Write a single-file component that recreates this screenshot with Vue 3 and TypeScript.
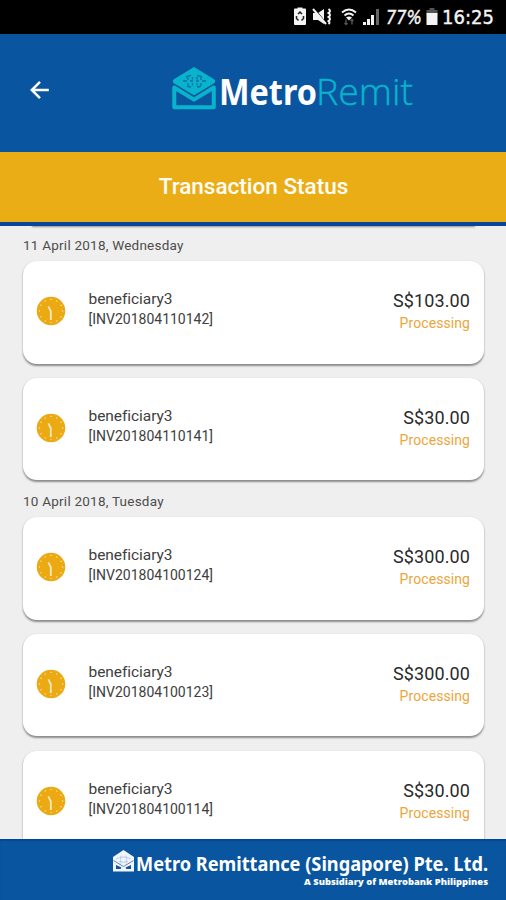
<script setup lang="ts">
interface Transaction {
  name: string
  invoice: string
  amount: string
  status: string
}

interface DayGroup {
  date: string
  items: Transaction[]
}

const entry = (invoice: string, amount: string): Transaction => ({
  name: 'beneficiary3',
  invoice: `[${invoice}]`,
  amount,
  status: 'Processing',
})

const groups: DayGroup[] = [
  {
    date: '11 April 2018, Wednesday',
    items: [entry('INV201804110142', 'S$103.00'), entry('INV201804110141', 'S$30.00')],
  },
  {
    date: '10 April 2018, Tuesday',
    items: [
      entry('INV201804100124', 'S$300.00'),
      entry('INV201804100123', 'S$300.00'),
      entry('INV201804100114', 'S$30.00'),
    ],
  },
]

const ticks = Array.from({ length: 12 }, (_, i) => {
  const a = (i * Math.PI) / 6
  return { x: 15 + 11.6 * Math.sin(a), y: 15 - 11.6 * Math.cos(a) }
})
</script>

<template>
  <div class="screen">
    <div class="status-bar">
      <svg class="status-art" viewBox="0 0 216 34" width="216" height="34">
        <g fill="#f4f4f4">
          <path d="M6 8.500h1.500v-1h5v1H15q1 0 1 1V24q0 1-1 1H5q-1 0-1-1V9.500q0-1 1-1z" />
          <path d="m8 14 2-2 2 2M13.500 16v2.500l-2 2M8.500 20.500l-2-2V16" fill="none" stroke="#222" stroke-width="1.500" />
          <path d="M23 13h5l6-4v15l-6-4h-5z" />
          <path d="M38.500 9q3 2 0 4 3 2 0 4 3 2 0 4 2 1.500 0 3" fill="none" stroke="#f4f4f4" stroke-width="2" />
          <path d="m25 9 12 15" stroke="#000" stroke-width="1" />
          <path d="m23 9 13 15" stroke="#f4f4f4" stroke-width="2" />
          <path d="M52 12.500q7-6 14 0M54.500 15.500q4.500-4 9 0" fill="none" stroke="#f4f4f4" stroke-width="2" />
          <path d="M56 17.500q3-2 6 0l-3 3z" />
          <path d="M56 19.500v5m-1.500-1.500 1.500 1.500 1.500-1.500M62 24.500v-5m-1.500 1.500 1.500-1.500 1.500 1.500" fill="none" stroke="#555" stroke-width="1.400" />
          <path d="M73 22h3v3h-3zM77 19h3v6h-3zM81 15h3v10h-3z" />
          <path d="M86 9h3v16h-3z" fill="#666" />
          <text class="status-text" x="96" y="24" textLength="36" lengthAdjust="spacingAndGlyphs" font-style="italic">77%</text>
          <path d="M139.500 8h5V10.500h-5zM136.500 10h11v4h-11z" fill="#555" />
          <path d="M136.500 13h11v12h-11z" />
          <text class="status-text" x="152" y="24" textLength="52" lengthAdjust="spacingAndGlyphs">16:25</text>
        </g>
      </svg>
    </div>

    <header class="app-bar">
      <svg class="back" viewBox="0 0 20 20" width="20" height="20">
        <path d="M18.800 10H2M10 1.800 1.800 10l8.200 8.200" fill="none" stroke="#fff" stroke-width="2.500" />
      </svg>
      <svg class="brand" viewBox="0 0 244 60" width="244" height="60">
        <path d="M23 1.500 43.500 14V16.500L23 28.800 2.500 16.500V14z" fill="#08b4cb" stroke="#08b4cb" stroke-linejoin="round" />
        <g fill="none" stroke="#0b6dac" stroke-width="1.400">
          <path d="M15 11q3-1.500 5-1.500M26 9.500q2 0 5 1.500M12 15h4M19 15h3M25 15h3M31 15h4M16 20q2 1 4 1M26 21q2 0 4-1" />
          <path d="M17 11.500v2.500M17 17v2.500M30 11.500v2.500M30 17v2.500M21.500 11v2.500M21.500 17v2.500M26 11v2.500M26 17v2.500" />
        </g>
        <path d="M3.300 21.500V41.200h39.500V21.500L23 33.600z" fill="none" stroke="#08b4cb" stroke-width="4" stroke-linejoin="round" />
        <text class="brand-bold" x="48" y="38.500" textLength="98" lengthAdjust="spacingAndGlyphs">Metro</text>
        <text class="brand-light" x="145" y="38.500" textLength="97" lengthAdjust="spacingAndGlyphs">Remit</text>
      </svg>
    </header>

    <h1 class="title"><span>Transaction Status</span></h1>

    <main class="list">
      <div class="passed-card"></div>
      <section v-for="group in groups" :key="group.date">
        <h2 class="date">{{ group.date }}</h2>
        <article v-for="item in group.items" :key="item.invoice" class="card">
          <svg class="clock" viewBox="0 0 30 30" width="30" height="30">
            <circle cx="15" cy="15" r="14.300" fill="#ebaa14" />
            <circle v-for="(t, i) in ticks" :key="i" :cx="t.x" :cy="t.y" r=".7" fill="#fbe4a8" />
            <path d="m12.300 10.300 2.500 5V24" fill="none" stroke="#fbe8bd" stroke-width="1.800" />
          </svg>
          <div class="who">
            <div class="name">{{ item.name }}</div>
            <div class="invoice">{{ item.invoice }}</div>
          </div>
          <div class="sum">
            <div class="amount">{{ item.amount }}</div>
            <div class="state">{{ item.status }}</div>
          </div>
        </article>
      </section>
    </main>

    <footer class="footer">
      <svg viewBox="0 0 378 51" width="378" height="51">
        <path d="M11.500 1 22 8v14.500H1V8z" fill="#f2f6fc" />
        <path d="M4 10q7.500-4 15 0M7 12.500q4.500 1.500 9 0M9 6.500q-1 4 0 8M14 6.500q1 4 0 8" fill="none" stroke="#b4c9e6" stroke-width=".9" />
        <path d="m1.500 11.500 10 6 10-6" fill="none" stroke="#5b86c0" stroke-width="1" />
        <path d="M4 16v4h4.500l1-1.500zM19 16v4h-4.500l-1-1.500z" fill="#1255a2" />
        <text class="company" x="24" y="22" textLength="352" lengthAdjust="spacingAndGlyphs">Metro Remittance (Singapore) Pte. Ltd.</text>
        <text class="parent" x="192" y="36" textLength="184" lengthAdjust="spacingAndGlyphs">A Subsidiary of Metrobank Philippines</text>
      </svg>
    </footer>
  </div>
</template>

<style>
body {
  margin: 0;
}
</style>

<style scoped>
.screen {
  width: 506px;
  height: 900px;
  display: flex;
  flex-direction: column;
  overflow: hidden;
  background: #efefef;
  font-family: Roboto, "Liberation Sans", sans-serif;
}
.status-bar {
  flex: none;
  height: 34px;
  display: flex;
  justify-content: flex-end;
  background: #000;
}
.status-text {
  font-family: "DejaVu Sans", sans-serif;
  font-size: 19px;
  stroke: #f4f4f4;
  stroke-width: 0.4;
}
.app-bar {
  flex: none;
  box-sizing: border-box;
  height: 118px;
  padding: 32px 0 0 30px;
  display: flex;
  align-items: flex-start;
  background: #0955a0;
}
.back {
  margin-top: 14px;
}
.brand {
  margin-left: 121px;
  overflow: visible;
}
.brand-bold {
  font: 700 35px "Noto Sans", sans-serif;
  fill: #fff;
}
.brand-light {
  font: 300 37px "Open Sans", sans-serif;
  fill: #08b4cb;
  stroke: #08b4cb;
  stroke-width: 0.4;
}
.title {
  flex: none;
  box-sizing: border-box;
  height: 73.500px;
  margin: 0;
  padding: 0 0 1.500px 1px;
  display: flex;
  align-items: center;
  justify-content: center;
  border-bottom: 4px solid #06479a;
  background: #ebad16;
  color: #fffdf6;
  font-size: 22.500px;
  font-weight: 500;
}
.list {
  flex: 1;
  min-height: 0;
  overflow: hidden;
  padding: 0 22px 0 23px;
}
.passed-card {
  height: 0;
  margin: 0 10px 13.100px;
  box-shadow: 0 0 2px 1px #8a8a8a;
}
.date {
  height: 22.400px;
  margin: 0;
  color: #4d4d4d;
  font-size: 13.500px;
  font-weight: 400;
  line-height: 12.500px;
  letter-spacing: 0.230px;
}
.card {
  box-sizing: border-box;
  height: 102.600px;
  margin-bottom: 14.200px;
  padding: 0 14px 0 13px;
  display: flex;
  align-items: flex-start;
  border-radius: 14px;
  background: #fff;
  box-shadow: 0 1.500px 2px rgba(0, 0, 0, 0.42);
}
.clock {
  flex: none;
  margin: 35px 0 0 0;
}
.who {
  margin: 28px 0 0 22.500px;
  color: #404040;
}
.name {
  font-size: 15.500px;
  line-height: 21px;
  letter-spacing: -0.050px;
}
.invoice {
  font-size: 14px;
  line-height: 19px;
}
.sum {
  margin: 28px 0 0 auto;
  text-align: right;
}
.amount {
  color: #2a2a2a;
  font-size: 18px;
  line-height: 23px;
  letter-spacing: 0.100px;
}
.state {
  color: #eba63c;
  font-size: 14px;
  line-height: 23px;
  letter-spacing: 0.080px;
}
.footer {
  flex: none;
  box-sizing: border-box;
  height: 61px;
  padding: 10px 16px 0 0;
  display: flex;
  justify-content: flex-end;
  align-items: flex-start;
  background: #0955a0;
  box-shadow: inset 0 2px 1px #064792;
}
.footer svg {
  overflow: visible;
}
.company {
  font: 700 19px "Noto Sans", sans-serif;
  fill: #fff;
}
.parent {
  font: 800 9px "Open Sans", sans-serif;
  fill: #fff;
}
</style>
